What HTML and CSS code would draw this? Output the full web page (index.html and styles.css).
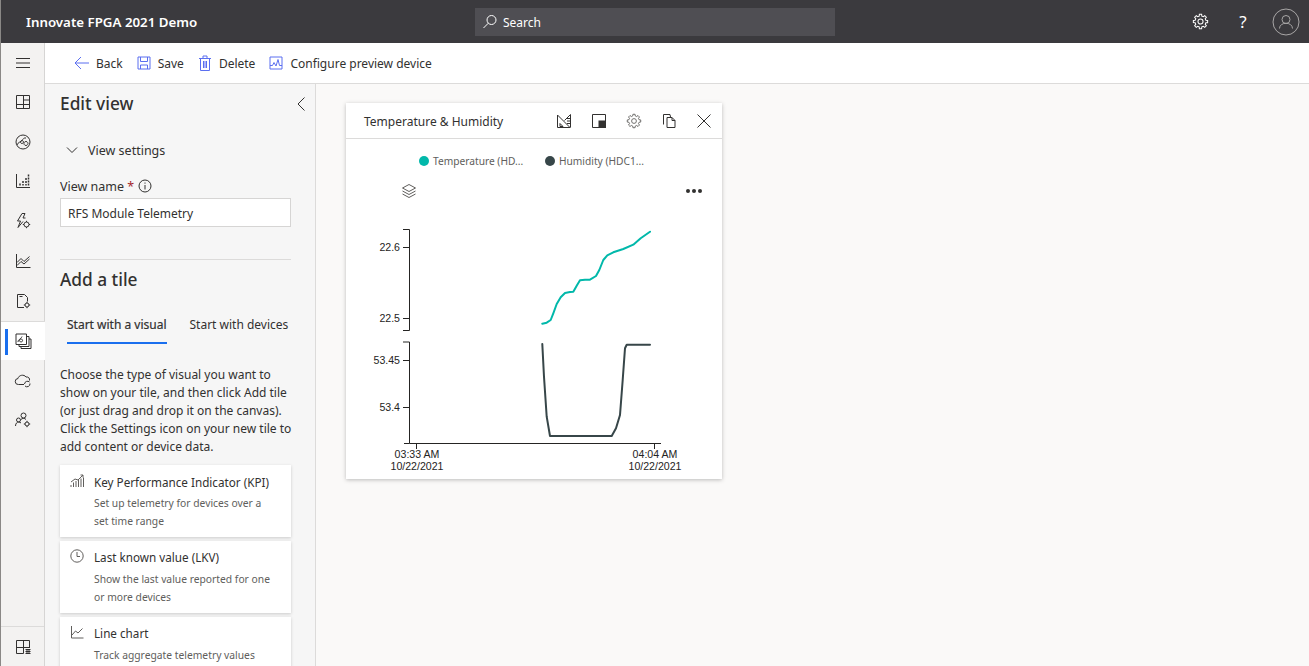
FILE: index.html
```html
<html>
<head>
<meta charset="UTF-8">
<link rel="stylesheet" href="styles.css">
</head>
<body>
<svg class="defs">
<symbol id="gear" viewBox="0 0 20 20"><path d="M18.400 11.330 16.310 11.570 15.570 13.350 16.880 15 15 16.880 13.350 15.570 11.570 16.310 11.330 18.400H8.670L8.430 16.310 6.650 15.570 5 16.880 3.120 15 4.430 13.350 3.690 11.570 1.600 11.330V8.670L3.690 8.430 4.430 6.650 3.120 5 5 3.120 6.650 4.430 8.430 3.690 8.670 1.600H11.330L11.570 3.690 13.350 4.430 15 3.120 16.880 5 15.570 6.650 16.310 8.430 18.400 8.670z"/><circle cx="10" cy="10" r="3"/></symbol>
<symbol id="tile" viewBox="0 0 20 20"><path d="M3.5 3.5h13v13h-13zM3.5 12.500h13M10.500 3.500v13M10.500 8h6"/></symbol>
</svg>
<header class="topbar">
<div class="app-name">Innovate FPGA 2021 Demo</div>
<div class="search">
<svg class="ico" width="18" height="18" viewBox="0 0 18 18"><circle cx="10.500" cy="7" r="4.500"/><path d="M7.300 10.200 2.500 15"/></svg>
<span>Search</span>
</div>
<div class="top-actions">
<svg class="ico gear-top" width="17" height="17"><use href="#gear"/></svg>
<span class="help">?</span>
<svg class="ico avatar" width="28" height="28" viewBox="0 0 28 28"><circle cx="14" cy="14" r="13"/><circle cx="14" cy="11.500" r="4"/><path d="M7.500 20.500c0-7 13-7 13 0"/></svg>
</div>
</header>
<div class="app">
<nav class="nav">
<div class="nav-item first"><svg class="ico" width="20" height="20" viewBox="0 0 20 20"><path d="M3 5.500h14M3 10h14M3 14.500h14"/></svg></div>
<div class="nav-item"><svg class="ico" width="20" height="20"><use href="#tile"/></svg></div>
<div class="nav-item"><svg class="ico" width="20" height="20" viewBox="0 0 20 20"><circle cx="10" cy="10" r="7"/><path d="M4 13c1-3 4-3 5-4.500s2-3 4-2.500M13 9.500a2 2 0 1 1-.1 0zM9 8.500a1.500 1.500 0 1 1-.1 0z"/></svg></div>
<div class="nav-item"><svg class="ico" width="20" height="20" viewBox="0 0 20 20"><path d="M3.500 3v13.500h13.500"/><path d="M15.500 3.500v11M13 7v7.500M10 10v4.500M7 12.500v2" stroke-dasharray="2 1" stroke-width="1.500"/></svg></div>
<div class="nav-item"><svg class="ico" width="20" height="20" viewBox="0 0 20 20"><path d="M9 2.500 4.500 10h3l-2.500 6.500 5-6M9 2.500h3L10 7h2.500"/><circle cx="13.500" cy="13.500" r="2.500"/><path d="M13.500 9.800v1.200M13.500 16v1.200M9.800 13.500h1.200M16 13.500h1.200"/></svg></div>
<div class="nav-item"><svg class="ico" width="20" height="20" viewBox="0 0 20 20"><path d="M3.500 3v13.500h14M4 11.500 8 7.500l3 3 5.500-5M4 14.500l4-4 3 2.500 5.500-5"/></svg></div>
<div class="nav-item"><svg class="ico" width="20" height="20" viewBox="0 0 20 20"><path d="M11 16.500H4.500v-13h7l3 3v4M6.500 5.500h3"/><circle cx="14" cy="14" r="2"/><path d="M14 10.800v1.200M14 16v1.200M10.800 14h1.200M16 14h1.200"/></svg></div>
<div class="nav-item active"><svg class="ico" width="20" height="20" viewBox="0 0 20 20"><path d="M3 3h10.500v10.500H3zM13.500 5.500h2.500v10H6v-2M16 8h2v9.500H8v-2"/><path d="M5 11c0-2 1-2 2-3s2-2 2-2.500M8 11a1.500 1.500 0 1 1 .1 0z"/></svg></div>
<div class="nav-item"><svg class="ico" width="20" height="20" viewBox="0 0 20 20"><path d="M11 14.500H5.500a3 3 0 0 1-.5-6c.6-3.500 6-4.500 8-1.500 2.500-.5 4 1.500 3.500 3.500"/><path d="M11.500 14a3 3 0 0 1 5-2M17 13.500a3 3 0 0 1-5 2.500"/></svg></div>
<div class="nav-item"><svg class="ico" width="20" height="20" viewBox="0 0 20 20"><circle cx="10.500" cy="5.500" r="2.500"/><circle cx="5.500" cy="10" r="2"/><path d="M2.500 16c0-3 2-4 3-4s2 .5 2.500 1M8 9.500c1-1.500 4-1.500 5 0"/><circle cx="14" cy="14" r="2"/><path d="M14 10.800v1.200M14 16v1.200M10.800 14h1.200M16 14h1.200"/></svg></div>
<div class="nav-bottom"><svg class="ico" width="20" height="20" viewBox="0 0 20 20"><path d="M10.500 16.500h-7v-13h13v7.500M3.500 10.500h13M10.500 3.500v13M12.500 12.500h5M12.500 14.500h5M12.500 16.500h5M14 12.500v4.500M16 12.500v4.500"/></svg></div>
</nav>
<div class="workspace">
<div class="toolbar">
<div class="cmd"><svg class="ico blue" width="15" height="16" viewBox="0 0 15 16"><path d="M15 8H1M7 2 1 8l6 6"/></svg><span>Back</span></div>
<div class="cmd"><svg class="ico blue" width="14" height="14" viewBox="0 0 14 14"><path d="M1 1h12v12H1zM3.500 1v4.500h7V1M3.500 13V9h7v4"/></svg><span>Save</span></div>
<div class="cmd"><svg class="ico blue" width="14" height="16" viewBox="0 0 14 16"><path d="M2.500 3.500v12h9v-12M1 3.500h12M5 3.500V1h4v2.500M5.500 6v7M8.500 6v7M7 6v7"/></svg><span>Delete</span></div>
<div class="cmd"><svg class="ico blue" width="14" height="14" viewBox="0 0 14 14"><path d="M1 1h12v12H1zM1 9.500h2.500L5 6.500l2 3.500 2-6.500 1.500 6H13"/></svg><span>Configure preview device</span></div>
</div>
<div class="content">
<aside class="panel">
<div class="panel-head">
<h2>Edit view</h2>
<svg class="ico" width="12" height="16" viewBox="0 0 12 16"><path d="M9.500 1.500 3 8l6.500 6.500"/></svg>
</div>
<div class="section-toggle">
<svg class="ico" width="12" height="8" viewBox="0 0 12 8"><path d="M1 1.500 6 6.500l5-5"/></svg>
<span>View settings</span>
</div>
<div class="field-label">
<span>View name <b>*</b></span>
<svg class="ico" width="14" height="14" viewBox="0 0 14 14"><circle cx="7" cy="7" r="6"/><path d="M7 6v4.500M7 3.500v1.200"/></svg>
</div>
<div class="text-input">RFS Module Telemetry</div>
<hr class="rule">
<h2 class="add-title">Add a tile</h2>
<div class="tabs">
<div class="tab selected">Start with a visual</div>
<div class="tab">Start with devices</div>
</div>
<p class="intro">Choose the type of visual you want to show on your tile, and then click Add tile (or just drag and drop it on the canvas). Click the Settings icon on your new tile to add content or device data.</p>
<div class="visual">
<svg class="ico soft" width="14" height="14" viewBox="0 0 14 14"><path d="M1 13v-2M3.500 13V8.500M6 13V7M8.500 13V6M11 13V4.500M13.500 13V3.500M1 8l4-3 3 1 5-5M10.500 1H13v2.500"/></svg>
<div><h3>Key Performance Indicator (KPI)</h3><p>Set up telemetry for devices over a set time range</p></div>
</div>
<div class="visual">
<svg class="ico soft" width="14" height="14" viewBox="0 0 14 14"><circle cx="7" cy="7" r="6.200"/><path d="M7 3v4.500H10"/></svg>
<div><h3>Last known value (LKV)</h3><p>Show the last value reported for one or more devices</p></div>
</div>
<div class="visual">
<svg class="ico soft" width="14" height="14" viewBox="0 0 14 14"><path d="M1.500 1v12h12M2 10l3.500-4 2.500 2 4.500-4.500"/></svg>
<div><h3>Line chart</h3><p>Track aggregate telemetry values</p></div>
</div>
</aside>
<main class="canvas">
<section class="tile">
<div class="tile-head">
<span class="tile-title">Temperature &amp; Humidity</span>
<div class="tile-actions">
<svg class="ico" width="16" height="16" viewBox="0 0 16 16"><path d="M1.500 2 14 14.500H1.500zM4 10.500 7 13.500H4zM14.500 1.500 8.500 7.500M14.500 1.500V14.500M11 5.500h3.500M11 8h3.500M11 10.500h3.500"/></svg>
<svg class="ico" width="16" height="16" viewBox="0 0 16 16"><path d="M1.500 1.500h13v13h-13z"/><rect class="fill" x="8" y="8" width="6.500" height="6.500"/></svg>
<svg class="ico soft gear-tile" width="16" height="16"><use href="#gear"/></svg>
<svg class="ico" width="16" height="16" viewBox="0 0 16 16"><path d="M2.500 11.500v-10h6.500l.5 2.500M6 14.500V4.500h5l3 3v7zM11 4.500v3h3"/></svg>
<svg class="ico" width="16" height="16" viewBox="0 0 16 16"><path d="M1.500 1.500l13 13M14.500 1.500l-13 13"/></svg>
</div>
</div>
<div class="legend">
<span class="dot teal"></span><span class="legend-text first">Temperature (HD...</span>
<span class="dot slate"></span><span class="legend-text">Humidity (HDC1...</span>
</div>
<div class="chart-tools">
<svg class="ico soft" width="16" height="16" viewBox="0 0 16 16"><path d="M8 1.500l6.500 3.500L8 8.500 1.500 5zM1.500 8 8 11.500 14.500 8M1.500 11 8 14.500 14.500 11"/></svg>
<div class="more"><i></i><i></i><i></i></div>
</div>
<svg class="chart" width="376" height="274" viewBox="346 205 376 274">
<g class="axis">
<path d="M403 229.500h6.500V330.500H403M403 247.500h6.500M403 318.500h6.500"/>
<path d="M403 342h6.500V443.500H404M403 360.500h6.500M403 407.500h6.500M409.500 443.500H661M416.500 443.500V449M654.500 443.500V449"/>
</g>
<g class="labels">
<text x="400" y="251">22.6</text>
<text x="400" y="322">22.5</text>
<text x="400" y="364">53.45</text>
<text x="400" y="411">53.4</text>
</g>
<g class="labels mid">
<text x="417" y="457.500">03:33 AM</text>
<text x="417" y="469.500">10/22/2021</text>
<text x="655" y="457.500">04:04 AM</text>
<text x="655" y="469.500">10/22/2021</text>
</g>
<polyline class="line teal-line" points="542.300,323.700 546.700,322.700 550.700,320 553.300,313.300 556.700,304 560.700,297.300 565,293 570,292 573.300,291.700 576.700,285.700 580,280.300 585,279.700 590,279.700 596,276 599.300,270 603.300,260 607.300,255.300 613.300,252.300 623.300,249 633.300,244.700 640.700,238.300 650,231.700"/>
<polyline class="line slate-line" points="542.300,344 544,376.700 546.700,416.700 550,436 611.700,436 616,428.300 620,415 622.700,380 625,348.300 626.700,344.700 650,344.700"/>
</svg>
</section>
</main>
</div>
</div>
</div>
</body>
</html>
```

FILE: styles.css
```css
*{
margin:0;
padding:0;
box-sizing:border-box;
}
html,body{
height:100%;
overflow:hidden;
}
body{
display:flex;
flex-direction:column;
font-family:"Noto Sans","Liberation Sans",sans-serif;
font-size:12px;
color:#323130;
background:#fff;
border-left:1px solid #8a8886;
}
.defs{display:none;}
.ico{
fill:none;
stroke:#323130;
stroke-width:1;
flex:none;
}
.ico.blue{stroke:#5b6ff0;}
.ico.soft{stroke:#605e5c;}
.ico .fill{fill:#323130;}
.gear-tile{stroke-width:1.100;}

.topbar{
height:43px;
flex:none;
background:#3b3a3e;
display:flex;
align-items:center;
padding-left:25px;
color:#fff;
}
.app-name{
font-size:13.300px;
font-weight:600;
width:449px;
}
.search{
width:360px;
height:28px;
background:#4f4e53;
display:flex;
align-items:center;
gap:4px;
padding-left:6px;
margin-top:1px;
}
.search .ico{stroke:#fff;}
.top-actions{
margin-left:auto;
display:flex;
align-items:center;
padding-right:9px;
}
.gear-top{stroke:#fff;stroke-width:1.200;margin-right:27px;}
.help{
font-size:17px;
width:14px;
margin-right:22px;
text-align:center;
}
.avatar{stroke:#a8a6a6;}

.app{
flex:1;
display:flex;
min-height:0;
}
.nav{
width:44px;
flex:none;
background:#f3f2f1;
border-right:1px solid #d6d5d4;
display:flex;
flex-direction:column;
}
.nav-item{
height:39.800px;
display:flex;
align-items:center;
justify-content:center;
flex:none;
}
.nav-item.first{
height:38.900px;
padding-top:1px;
}
.nav-item.active{
background:#fff;
margin-right:-1px;
border-top:1px solid #dcdbda;
position:relative;
}
.nav-item.active::before{
content:"";
position:absolute;
left:4px;
top:7px;
width:3px;
height:26px;
background:#1a6fee;
}
.nav-bottom{
margin-top:auto;
height:40px;
border-top:1px solid #dcdbda;
display:flex;
align-items:center;
justify-content:center;
}

.workspace{
flex:1;
display:flex;
flex-direction:column;
min-width:0;
}
.toolbar{
height:41px;
flex:none;
background:#fff;
border-bottom:1px solid #dcdbda;
display:flex;
align-items:center;
padding-left:29px;
gap:14px;
}
.cmd{
display:flex;
align-items:center;
gap:7px;
}
.content{
flex:1;
display:flex;
min-height:0;
}
.panel{
width:271px;
flex:none;
background:#f6f6f6;
border-right:1px solid #dcdbda;
padding:0 24px 0 15px;
overflow:hidden;
}
.panel-head{
display:flex;
align-items:center;
justify-content:space-between;
height:39px;
margin-right:-16px;
}
h2{
font-size:17.300px;
font-weight:500;
}
.section-toggle{
display:flex;
align-items:center;
gap:10px;
padding-left:6px;
height:22px;
margin-top:16px;
font-size:12.500px;
}
.field-label{
display:flex;
align-items:center;
gap:4px;
height:24px;
margin-top:13px;
font-size:12.500px;
}
.field-label b{color:#a4262c;font-weight:400;}
.text-input{
height:29px;
background:#fff;
border:1px solid #d6d5d4;
line-height:29px;
padding-left:7px;
}
.rule{
border:0;
border-top:1px solid #dcdbda;
margin-top:32px;
}
.add-title{
margin-top:7px;
line-height:25px;
}
.tabs{
display:flex;
gap:23px;
margin-top:23px;
padding-left:7px;
}
.tab{
height:29px;
line-height:20px;
white-space:nowrap;
}
.tab.selected{
border-bottom:2px solid #1a6fee;
-webkit-text-stroke:.2px #323130;
}
.intro{
margin-top:22px;
line-height:18px;
margin-right:-4px;
}
.visual{
display:flex;
gap:10px;
background:#fff;
box-shadow:0 1px 3px rgba(0,0,0,.18);
height:72px;
padding:9px 10px;
margin-top:4px;
}
.intro + .visual{margin-top:9px;}
.visual + .visual{padding-top:8px;}
.visual + .visual p{margin-top:5px;}
.visual h3{
font-size:11.700px;
font-weight:400;
line-height:16px;
white-space:nowrap;
}
.visual p{
font-size:10.300px;
line-height:18px;
color:#605e5c;
margin-top:4px;
max-width:180px;
}
.canvas{
flex:1;
background:#faf9f8;
padding:19px 30px;
overflow:hidden;
}
.tile{
width:376px;
height:376px;
background:#fff;
box-shadow:0 1px 4px rgba(0,0,0,.25);
}
.tile-head{
height:36px;
border-bottom:1px solid #dcdbda;
display:flex;
align-items:center;
justify-content:space-between;
padding:0 10px 0 18px;
}
.tile-title{margin-top:2px;}
.tile-actions{
display:flex;
align-items:center;
gap:19px;
}
.legend{
display:flex;
align-items:center;
height:44px;
padding-left:73px;
font-size:10.200px;
color:#605e5c;
}
.dot{
width:10px;
height:10px;
border-radius:50%;
margin-right:4px;
}
.dot.teal{background:#01b8aa;}
.dot.slate{background:#374649;}
.legend-text{white-space:nowrap;}
.legend-text.first{width:112px;}
.chart-tools{
display:flex;
align-items:center;
justify-content:space-between;
height:16px;
padding:0 20px 0 55px;
}
.more{display:flex;gap:2px;}
.more i{
width:4px;
height:4px;
border-radius:50%;
background:#323130;
}
.chart{display:block;margin-top:6px;}
.axis path{
fill:none;
stroke:#252423;
stroke-width:1;
}
.labels text{
font-family:"Liberation Sans",Arial,sans-serif;
font-size:10.600px;
fill:#252423;
text-anchor:end;
}
.labels.mid text{text-anchor:middle;}
.line{
fill:none;
stroke-width:2;
stroke-linejoin:round;
stroke-linecap:round;
}
.teal-line{stroke:#01b8aa;}
.slate-line{stroke:#374649;}
```
